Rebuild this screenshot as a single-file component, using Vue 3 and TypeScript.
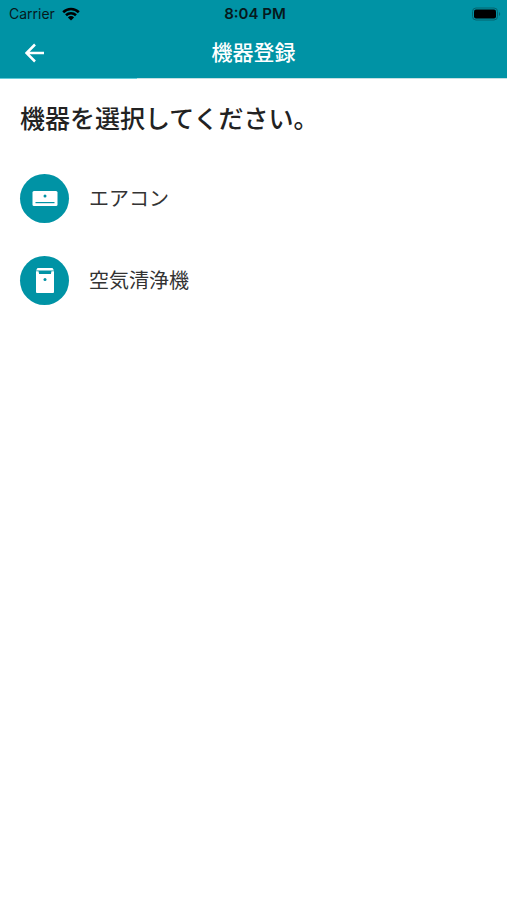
<script setup lang="ts">
type DeviceKind = 'aircon' | 'purifier'

interface Device {
  kind: DeviceKind
  name: string
}

const devices: Device[] = [
  { kind: 'aircon', name: 'エアコン' },
  { kind: 'purifier', name: '空気清浄機' },
]
</script>

<template>
  <div class="screen">
    <header class="header">
      <div class="status">
        <div class="carrier">
          <span>Carrier</span>
          <svg class="wifi" viewBox="0 0 18 14" aria-hidden="true">
            <path d="M1.2 5.2a11.2 11.2 0 0 1 15.6 0" />
            <path d="M4 8.2a7.2 7.2 0 0 1 10 0" />
            <path class="wifi-dot" d="M9 13.6 5.9 10.4a4.4 4.4 0 0 1 6.2 0Z" />
          </svg>
        </div>
        <span class="clock">8:04 PM</span>
        <svg class="battery" viewBox="0 0 30 14" aria-hidden="true">
          <rect class="battery-case" x="1.5" y="1" width="25" height="12" rx="3.5" />
          <rect x="3" y="2.5" width="22" height="9" rx="2" />
          <path class="battery-tip" d="M28 5v4c1.6-.5 1.6-3.5 0-4Z" />
        </svg>
      </div>
      <nav class="bar">
        <button class="back" type="button" aria-label="戻る">
          <svg viewBox="0 0 20 20" aria-hidden="true">
            <path d="M19 10H2M10 1.5 1.5 10l8.5 8.5" />
          </svg>
        </button>
        <h1 class="title">機器登録</h1>
      </nav>
      <div class="progress"></div>
    </header>

    <main class="content">
      <h2 class="prompt">機器を選択してください。</h2>
      <ul class="devices">
        <li v-for="device in devices" :key="device.kind">
          <button class="device" type="button">
            <span class="badge">
              <svg v-if="device.kind === 'aircon'" viewBox="0 0 49 49" aria-hidden="true">
                <rect class="body" x="12.5" y="17" width="25" height="15" rx="1.5" />
                <circle class="detail" cx="25" cy="22" r="1.5" />
                <rect class="detail" x="15.5" y="28" width="19" height="1.2" />
              </svg>
              <svg v-else viewBox="0 0 49 49" aria-hidden="true">
                <path class="body" d="M17.5 12h15l1.5 2.5V36a1 1 0 0 1-1 1h-16a1 1 0 0 1-1-1V14.5Z" />
                <path class="detail" d="M16 14.5h18v.8H16ZM18.5 15h13l-.6 3H19.100Z" />
                <circle class="detail" cx="25" cy="23.5" r="1.5" />
              </svg>
            </span>
            <span>{{ device.name }}</span>
          </button>
        </li>
      </ul>
    </main>
  </div>
</template>

<style>
body {
  background: #fff;
}
</style>

<style scoped>
.screen {
  min-height: 100vh;
  background: #fff;
  color: #222;
  font-family: Inter, "Noto Sans CJK JP", sans-serif;
}

.header {
  background: #0093a5;
}

.status {
  display: grid;
  grid-template-columns: 1fr auto 1fr;
  align-items: center;
  height: 27px;
  padding: 0 6px 0 9px;
  color: #06191c;
  font-size: 14px;
  line-height: 27px;
}

.carrier {
  display: flex;
  align-items: center;
  gap: 7px;
}

.wifi {
  width: 18px;
  height: 14px;
  fill: none;
  stroke: #000;
  stroke-width: 2.6;
}

.wifi-dot {
  fill: #000;
  stroke: none;
}

.clock {
  font-size: 15px;
  font-weight: 600;
}

.battery {
  justify-self: end;
  width: 30px;
  height: 14px;
}

.battery-case {
  fill: none;
  stroke: #04656f;
}

.battery-tip {
  fill: #04656f;
}

.bar {
  display: grid;
  grid-template-columns: 1fr auto 1fr;
  align-items: center;
  height: 51px;
  padding: 0 20px;
}

.progress {
  height: 1px;
  background: linear-gradient(to right, #62cbd8 27%, #c4dfe2 27%);
}

.back {
  justify-self: start;
  display: flex;
  padding: 5px;
  border: 0;
  background: none;
  cursor: pointer;
}

.back svg {
  width: 20px;
  height: 20px;
  fill: none;
  stroke: #fff;
  stroke-width: 2.5;
}

.title {
  margin: 0;
  color: #fff;
  font-size: 21px;
  font-weight: 500;
  line-height: 32px;
}

.content {
  padding: 20px;
}

.prompt {
  margin: 0 0 35px;
  font-size: 25px;
  font-weight: 500;
  line-height: 40px;
}

.devices {
  display: grid;
  gap: 33px;
  margin: 0;
  padding: 0;
  list-style: none;
}

.device {
  display: flex;
  align-items: center;
  gap: 20px;
  width: 100%;
  padding: 0;
  border: 0;
  background: none;
  color: #333;
  font: inherit;
  font-size: 20px;
  line-height: 30px;
  text-align: left;
  cursor: pointer;
}

.badge {
  display: flex;
  width: 49px;
  height: 49px;
  border-radius: 50%;
  background: #0093a5;
}

.body {
  fill: #fff;
}

.detail {
  fill: #0093a5;
}
</style>
